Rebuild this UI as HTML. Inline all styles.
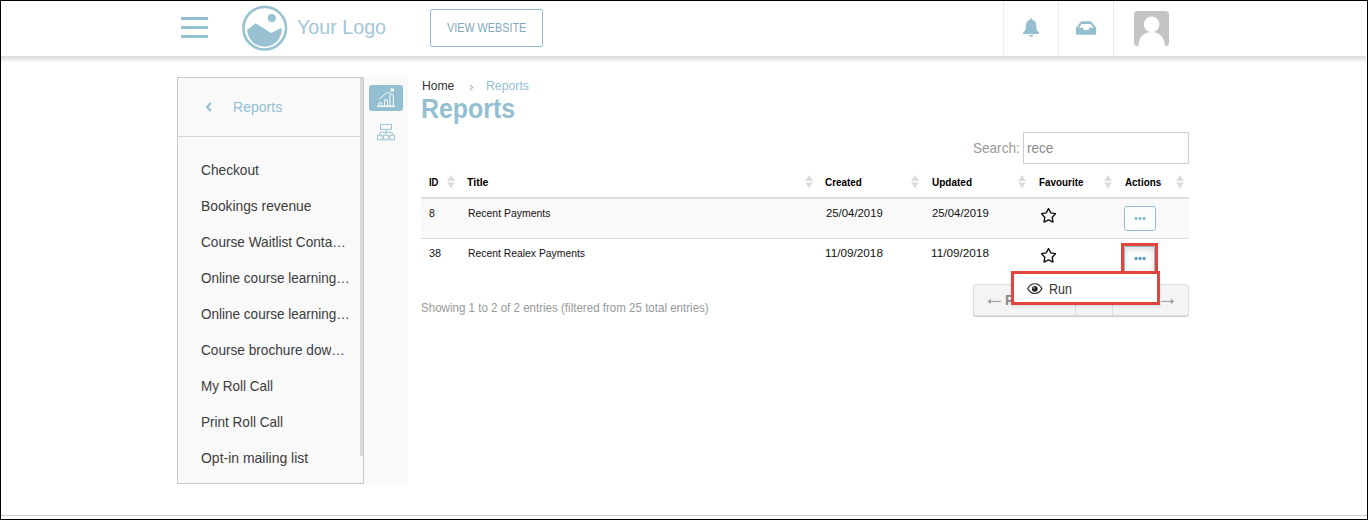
<!DOCTYPE html>
<html><head><meta charset="utf-8">
<style>
*{box-sizing:border-box;margin:0;padding:0}
html,body{width:1368px;height:520px;overflow:hidden;background:#fff;font-family:"Liberation Sans",sans-serif;}
.frame{position:absolute;left:0;top:0;width:1368px;height:520px;border:1px solid #000;z-index:100}
.abs{position:absolute}
.t{position:absolute;white-space:nowrap;line-height:1}
.vdiv{position:absolute;top:1px;width:1px;height:55px;background:#ebebeb}
</style></head><body>
<div class="abs" id="header" style="left:0;top:0;width:1368px;height:56px;background:#fff">
  <div class="abs" style="left:181px;top:17px;width:27px;height:3px;background:#94bfd0"></div>
  <div class="abs" style="left:181px;top:26px;width:27px;height:3px;background:#94bfd0"></div>
  <div class="abs" style="left:181px;top:35px;width:27px;height:3px;background:#94bfd0"></div>
  <svg class="abs" style="left:241px;top:5px" width="47" height="47" viewBox="0 0 47 47">
    <circle cx="23.7" cy="23.2" r="21.3" fill="none" stroke="#98c2d2" stroke-width="2.6"/>
    <circle cx="30.8" cy="13" r="4.1" fill="#98c2d2"/>
    <path d="M6.1 25 L14.7 18.3 L30.2 28 L39.6 23.2 Q40.6 22.8 40.7 23.8 A17 17 0 0 1 6.1 25 Z" fill="#98c2d2"/>
  </svg>
  <div class="abs" style="left:430px;top:9px;width:113px;height:38px;border:1px solid #94bfd0;border-radius:2px"></div>
  <div class="vdiv" style="left:1003px"></div>
  <div class="vdiv" style="left:1058px"></div>
  <div class="vdiv" style="left:1113px"></div>
  <svg class="abs" style="left:1022px;top:18px" width="18" height="20" viewBox="0 0 18 20">
    <path d="M9.1 0.6 C9.8 0.6 10.2 1.1 10.3 1.8 C12.6 2.5 14.1 4.6 14.2 7.2 L14.6 11.2 C14.8 12.4 15.6 13.1 16.6 13.7 C17.3 14.1 17.3 15.9 16.3 15.9 L1.9 15.9 C0.9 15.9 0.9 14.1 1.6 13.7 C2.6 13.1 3.4 12.4 3.6 11.2 L4 7.2 C4.1 4.6 5.6 2.5 7.9 1.8 C8 1.1 8.4 0.6 9.1 0.6 Z" fill="#94bfd0"/>
    <path d="M6.9 17.1 L11.1 17.1 C11.1 18.2 10.2 18.7 9 18.7 C7.8 18.7 6.9 18.2 6.9 17.1 Z" fill="#94bfd0"/>
  </svg>
  <svg class="abs" style="left:1076px;top:21px" width="21" height="14" viewBox="0 0 21 14">
    <path d="M5.8 0.2 L14.4 0.2 Q15.2 0.2 15.6 0.9 L19.8 6.3 Q20.2 6.8 20.2 7.5 L20.2 12.8 Q20.2 13.8 19.2 13.8 L1 13.8 Q0 13.8 0 12.8 L0 7.5 Q0 6.8 0.4 6.3 L4.6 0.9 Q5 0.2 5.8 0.2 Z M5.7 3.1 L14.5 3.1 L17.4 6.7 L13.3 6.7 L12.4 8.9 L7.8 8.9 L6.9 6.7 L2.9 6.7 Z" fill="#94bfd0" fill-rule="evenodd"/>
  </svg>
  <svg class="abs" style="left:1134px;top:11px" width="35" height="35" viewBox="0 0 35 35">
    <rect width="35" height="35" rx="3.5" fill="#c4c4c4"/>
    <circle cx="17.6" cy="13.4" r="7.8" fill="#fff"/>
    <path d="M4.3 35 C4.6 26 10 21 17.6 21 C25.2 21 30.6 26 30.9 35 Z" fill="#fff"/>
  </svg>
</div>
<div class="abs" style="left:1px;top:56px;width:1365px;height:7px;background:linear-gradient(#d9d9d9,#e6e6e6 30%,#fff)"></div>

<div class="abs" style="left:177px;top:77px;width:187px;height:407px;background:#f9f9f9;border:1px solid #c8c8c8"></div>
<div class="abs" style="left:178px;top:136px;width:182px;height:1px;background:#d5d5d5"></div>
<div class="abs" style="left:360px;top:78px;width:3px;height:378px;background:#d9d9d9"></div>
<div class="abs" style="left:364px;top:77px;width:44px;height:407px;background:#f9f9f9"></div>
<svg class="abs" style="left:205px;top:101.5px" width="8" height="10" viewBox="0 0 8 10"><path d="M6 1 L2 5 L6 9" fill="none" stroke="#94bfd0" stroke-width="2.2"/></svg>
<div class="abs" style="left:369px;top:85px;width:34px;height:26px;background:#94bfd0;border-radius:3px"></div>
<svg class="abs" style="left:369px;top:85px" width="34" height="26" viewBox="0 0 34 26">
  <g fill="none" stroke="#fff" stroke-width="1">
    <line x1="8" y1="21.3" x2="26" y2="21.3" stroke-width="1.3"/>
    <path d="M9.8 21 L9.8 18.9 A1.45 1.45 0 0 1 12.7 18.9 L12.7 21"/>
    <path d="M15.6 21 L15.6 15.9 A1.45 1.45 0 0 1 18.5 15.9 L18.5 21"/>
    <path d="M20.9 21 L20.9 10.8 A1.7 1.7 0 0 1 24.3 10.8 L24.3 21"/>
    <polyline points="10.2,14.4 18.1,7.4 19.5,8.6 23,5.3"/>
  </g>
  <path d="M20.8 3.6 L25 3.4 L24.8 7.6 Z" fill="#fff"/>
</svg>
<svg class="abs" style="left:376px;top:123px" width="20" height="18" viewBox="0 0 20 18">
  <g fill="none" stroke="#94bfd0" stroke-width="0.9">
    <rect x="4.5" y="1.4" width="11" height="4.9"/>
    <line x1="10" y1="6.3" x2="10" y2="9.3"/>
    <polyline points="3.9,12 3.9,9.3 16.2,9.3 16.2,12"/>
    <line x1="10" y1="9.3" x2="10" y2="12"/>
    <rect x="1.5" y="12.2" width="4.6" height="4.6"/>
    <rect x="7.7" y="12.2" width="4.6" height="4.6"/>
    <rect x="13.9" y="12.2" width="4.6" height="4.6"/>
  </g>
</svg>

<div class="abs" style="left:1023px;top:132px;width:166px;height:32px;border:1px solid #ccc;border-radius:1px"></div>

<div class="abs" style="left:421px;top:197px;width:768px;height:2px;background:#ddd"></div>
<div class="abs" style="left:421px;top:199px;width:768px;height:39px;background:#f9f9f9"></div>
<div class="abs" style="left:421px;top:238px;width:768px;height:1px;background:#ddd"></div>

<div class="abs" style="left:1px;top:515px;width:1366px;height:1px;background:#cfcfcf"></div>

<svg class="abs" style="left:469px;top:84px" width="5" height="7" viewBox="0 0 5 7"><path d="M0.8 0.8 L3.8 3.5 L0.8 6.2" fill="none" stroke="#94bfd0" stroke-width="1.1"/></svg>
<!-- sort icons -->
<svg width="0" height="0" style="position:absolute"><defs><g id="sorti"><path d="M4 0 L8 6 L0 6 Z M0 7.5 L8 7.5 L4 13.5 Z" fill="#dcdcdc"/></g></defs></svg>
<svg class="abs" style="left:447.0px;top:175px" width="8" height="14"><use href="#sorti"/></svg>
<svg class="abs" style="left:805.0px;top:175px" width="8" height="14"><use href="#sorti"/></svg>
<svg class="abs" style="left:911.0px;top:175px" width="8" height="14"><use href="#sorti"/></svg>
<svg class="abs" style="left:1018.0px;top:175px" width="8" height="14"><use href="#sorti"/></svg>
<svg class="abs" style="left:1104.0px;top:175px" width="8" height="14"><use href="#sorti"/></svg>
<svg class="abs" style="left:1176.0px;top:175px" width="8" height="14"><use href="#sorti"/></svg>
<!-- stars -->
<svg width="0" height="0" style="position:absolute"><defs><g id="star"><path d="M7.50 0.50 L9.79 4.84 L14.63 5.68 L11.21 9.21 L11.91 14.07 L7.50 11.90 L3.09 14.07 L3.79 9.21 L0.37 5.68 L5.21 4.84 Z" fill="none" stroke="#111" stroke-width="1.4" stroke-linejoin="round"/></g></defs></svg>
<svg class="abs" style="left:1041px;top:208px" width="15" height="16"><use href="#star"/></svg>
<svg class="abs" style="left:1041px;top:248px" width="15" height="16"><use href="#star"/></svg>
<!-- action buttons -->
<div class="abs" style="left:1124px;top:206px;width:32px;height:25px;border:1px solid #94bfd0;border-radius:3px;background:#fcfcfc"></div>
<svg class="abs" style="left:1133px;top:216px" width="15" height="5"><circle cx="3.1" cy="2.5" r="1.65" fill="#94bfd0"/><circle cx="7.1" cy="2.5" r="1.65" fill="#94bfd0"/><circle cx="11.1" cy="2.5" r="1.65" fill="#94bfd0"/></svg>
<div class="abs" style="left:1124px;top:246px;width:31px;height:28px;border:1px solid #8dbccf;border-radius:1px;background:#fdfdfd;box-shadow:inset 0 3px 5px rgba(0,0,0,.12)"></div>
<svg class="abs" style="left:1133px;top:256px" width="15" height="5"><circle cx="3.1" cy="2.5" r="1.65" fill="#5d9bb6"/><circle cx="7.1" cy="2.5" r="1.65" fill="#5d9bb6"/><circle cx="11.1" cy="2.5" r="1.65" fill="#5d9bb6"/></svg>
<div class="abs" style="left:1121px;top:243px;width:37px;height:31px;border:3px solid #e3443e;border-bottom:none"></div>
<!-- pagination -->
<div class="abs" style="left:973px;top:284px;width:216px;height:32px;border:1px solid #dcdcdc;border-radius:3px;background:#f4f4f4;box-shadow:0 1px 1px rgba(0,0,0,.2)"></div>
<div class="abs" style="left:1075px;top:285px;width:1px;height:30px;background:#dcdcdc"></div>
<div class="abs" style="left:1112px;top:285px;width:1px;height:30px;background:#dcdcdc"></div>
<svg class="abs" style="left:987px;top:297px" width="15" height="9" viewBox="0 0 15 9"><path d="M14 4.4 L2 4.4" fill="none" stroke="#999" stroke-width="1"/><path d="M0.5 4.4 L3.8 1.8 L3.8 7 Z" fill="#999"/></svg>
<svg class="abs" style="left:1160px;top:297px" width="15" height="9" viewBox="0 0 15 9"><path d="M1 4.4 L13 4.4" fill="none" stroke="#999" stroke-width="1"/><path d="M14.2 4.4 L10.9 1.8 L10.9 7 Z" fill="#999"/></svg>
<!-- dropdown -->
<div class="abs" style="left:1011px;top:271px;width:149px;height:34px;border:3px solid #e3443e;background:#fff;box-shadow:0 2px 3px rgba(0,0,0,.08);z-index:20"></div>
<svg class="abs" style="left:1027px;top:283px;z-index:21" width="16" height="12" viewBox="0 0 16 12">
  <path d="M0.7 5.6 C2.3 2.4 4.8 0.7 7.8 0.7 C10.8 0.7 13.3 2.4 14.9 5.6 C13.3 8.8 10.8 10.5 7.8 10.5 C4.8 10.5 2.3 8.8 0.7 5.6 Z" fill="none" stroke="#222" stroke-width="1.15"/>
  <circle cx="7.8" cy="5.8" r="2.9" fill="#222"/>
  <path d="M7.6 5.6 L6 5.6 A1.6 1.6 0 0 1 7.6 4 Z" fill="#fff"/>
</svg>
<div class="t" id="logo" style="left:296.80px;top:17.00px;font-size:20px;font-weight:400;color:#a3c6d5;letter-spacing:0.000px;transform:scaleX(0.9845);transform-origin:0 0;z-index:10">Your Logo</div>
<div class="t" id="vw" style="left:447.31px;top:22.00px;font-size:12.5px;font-weight:400;color:#7fa9bc;letter-spacing:0.000px;transform:scaleX(0.8639);transform-origin:0 0;z-index:10">VIEW WEBSITE</div>
<div class="t" id="sbrep" style="left:233.28px;top:100.00px;font-size:14.5px;font-weight:400;color:#94bfd0;letter-spacing:0.000px;transform:scaleX(0.9683);transform-origin:0 0;z-index:10">Reports</div>
<div class="t" id="i1" style="left:200.90px;top:163.00px;font-size:14.5px;font-weight:400;color:#3c3c3c;letter-spacing:0.000px;transform:scaleX(0.9446);transform-origin:0 0;z-index:10">Checkout</div>
<div class="t" id="i2" style="left:200.90px;top:199.00px;font-size:14.5px;font-weight:400;color:#3c3c3c;letter-spacing:0.000px;transform:scaleX(0.9515);transform-origin:0 0;z-index:10">Bookings revenue</div>
<div class="t" id="i3" style="left:200.91px;top:235.00px;font-size:14.5px;font-weight:400;color:#3c3c3c;letter-spacing:0.000px;transform:scaleX(0.9395);transform-origin:0 0;z-index:10">Course Waitlist Conta…</div>
<div class="t" id="i4" style="left:200.92px;top:271.00px;font-size:14.5px;font-weight:400;color:#3c3c3c;letter-spacing:0.000px;transform:scaleX(0.9328);transform-origin:0 0;z-index:10">Online course learning…</div>
<div class="t" id="i5" style="left:200.92px;top:307.00px;font-size:14.5px;font-weight:400;color:#3c3c3c;letter-spacing:0.000px;transform:scaleX(0.9328);transform-origin:0 0;z-index:10">Online course learning…</div>
<div class="t" id="i6" style="left:200.91px;top:343.00px;font-size:14.5px;font-weight:400;color:#3c3c3c;letter-spacing:0.000px;transform:scaleX(0.9404);transform-origin:0 0;z-index:10">Course brochure dow…</div>
<div class="t" id="i7" style="left:200.91px;top:379.00px;font-size:14.5px;font-weight:400;color:#3c3c3c;letter-spacing:0.000px;transform:scaleX(0.9301);transform-origin:0 0;z-index:10">My Roll Call</div>
<div class="t" id="i8" style="left:200.91px;top:415.00px;font-size:14.5px;font-weight:400;color:#3c3c3c;letter-spacing:0.000px;transform:scaleX(0.9335);transform-origin:0 0;z-index:10">Print Roll Call</div>
<div class="t" id="i9" style="left:200.90px;top:451.00px;font-size:14.5px;font-weight:400;color:#3c3c3c;letter-spacing:0.000px;transform:scaleX(0.9640);transform-origin:0 0;z-index:10">Opt-in mailing list</div>
<div class="t" id="home" style="left:422.26px;top:80.00px;font-size:12.5px;font-weight:400;color:#333;letter-spacing:0.000px;transform:scaleX(0.9706);transform-origin:0 0;z-index:10">Home</div>
<div class="t" id="crep" style="left:485.59px;top:80.00px;font-size:12.5px;font-weight:400;color:#94bfd0;letter-spacing:0.000px;transform:scaleX(0.9820);transform-origin:0 0;z-index:10">Reports</div>
<div class="t" id="h1" style="left:421.39px;top:96.00px;font-size:27px;font-weight:700;color:#94bfd0;letter-spacing:0.000px;transform:scaleX(0.9229);transform-origin:0 0;z-index:10">Reports</div>
<div class="t" id="search" style="left:973.31px;top:141.00px;font-size:14.5px;font-weight:400;color:#999;letter-spacing:0.000px;transform:scaleX(0.9349);transform-origin:0 0;z-index:10">Search:</div>
<div class="t" id="rece" style="left:1026.60px;top:141.00px;font-size:14.5px;font-weight:400;color:#888;letter-spacing:0.000px;transform:scaleX(0.9293);transform-origin:0 0;z-index:10">rece</div>
<div class="t" id="hID" style="left:429.06px;top:177.00px;font-size:11.5px;font-weight:700;color:#000;letter-spacing:0.000px;transform:scaleX(0.8197);transform-origin:0 0;z-index:10">ID</div>
<div class="t" id="hTitle" style="left:467.38px;top:177.00px;font-size:11.5px;font-weight:700;color:#000;letter-spacing:0.000px;transform:scaleX(0.9167);transform-origin:0 0;z-index:10">Title</div>
<div class="t" id="hCreated" style="left:825.49px;top:177.00px;font-size:11.5px;font-weight:700;color:#000;letter-spacing:0.000px;transform:scaleX(0.8607);transform-origin:0 0;z-index:10">Created</div>
<div class="t" id="hUpdated" style="left:932.07px;top:177.00px;font-size:11.5px;font-weight:700;color:#000;letter-spacing:0.000px;transform:scaleX(0.8696);transform-origin:0 0;z-index:10">Updated</div>
<div class="t" id="hFav" style="left:1038.50px;top:177.00px;font-size:11.5px;font-weight:700;color:#000;letter-spacing:0.000px;transform:scaleX(0.8578);transform-origin:0 0;z-index:10">Favourite</div>
<div class="t" id="hAct" style="left:1124.77px;top:177.00px;font-size:11.5px;font-weight:700;color:#000;letter-spacing:0.000px;transform:scaleX(0.8575);transform-origin:0 0;z-index:10">Actions</div>
<div class="t" id="r1id" style="left:429.09px;top:208.00px;font-size:11.5px;font-weight:400;color:#111;letter-spacing:0.000px;transform:scaleX(0.9106);transform-origin:0 0;z-index:10">8</div>
<div class="t" id="r1t" style="left:467.80px;top:208.00px;font-size:11.5px;font-weight:400;color:#111;letter-spacing:0.000px;transform:scaleX(0.9077);transform-origin:0 0;z-index:10">Recent Payments</div>
<div class="t" id="r1c" style="left:825.52px;top:208.00px;font-size:11.5px;font-weight:400;color:#111;letter-spacing:0.000px;transform:scaleX(0.9863);transform-origin:0 0;z-index:10">25/04/2019</div>
<div class="t" id="r1u" style="left:932.02px;top:208.00px;font-size:11.5px;font-weight:400;color:#111;letter-spacing:0.000px;transform:scaleX(0.9860);transform-origin:0 0;z-index:10">25/04/2019</div>
<div class="t" id="r2id" style="left:429.05px;top:248.00px;font-size:11.5px;font-weight:400;color:#111;letter-spacing:0.000px;transform:scaleX(0.9414);transform-origin:0 0;z-index:10">38</div>
<div class="t" id="r2t" style="left:467.80px;top:248.00px;font-size:11.5px;font-weight:400;color:#111;letter-spacing:0.000px;transform:scaleX(0.9015);transform-origin:0 0;z-index:10">Recent Realex Payments</div>
<div class="t" id="r2c" style="left:824.50px;top:248.00px;font-size:11.5px;font-weight:400;color:#111;letter-spacing:0.000px;transform:scaleX(1.0215);transform-origin:0 0;z-index:10">11/09/2018</div>
<div class="t" id="r2u" style="left:930.99px;top:248.00px;font-size:11.5px;font-weight:400;color:#111;letter-spacing:0.000px;transform:scaleX(1.0215);transform-origin:0 0;z-index:10">11/09/2018</div>
<div class="t" id="showing" style="left:421.09px;top:301.00px;font-size:13px;font-weight:400;color:#999;letter-spacing:0.000px;transform:scaleX(0.8888);transform-origin:0 0;z-index:10">Showing 1 to 2 of 2 entries (filtered from 25 total entries)</div>
<div class="t" id="run" style="left:1048.64px;top:282.00px;font-size:14px;font-weight:400;color:#333;letter-spacing:0.000px;transform:scaleX(0.8899);transform-origin:0 0;z-index:30">Run</div>
<div class="t" id="pprev" style="left:1005.07px;top:292.70px;font-size:14.5px;font-weight:700;color:#8a8a8a;letter-spacing:0.000px;transform:scaleX(1.0000);transform-origin:0 0;z-index:5">P</div>
<div class="frame"></div>

</body></html>
